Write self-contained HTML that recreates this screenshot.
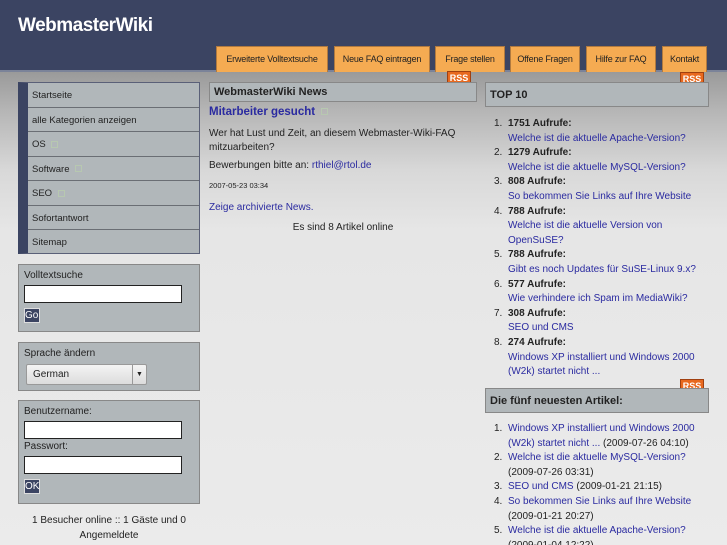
<!DOCTYPE html>
<html><head><meta charset="utf-8"><style>
*{margin:0;padding:0;box-sizing:border-box}
html{width:727px;height:545px;overflow:hidden;background:#ebebeb}
body{width:727px;height:545px;overflow:hidden;font-family:"Liberation Sans",sans-serif;font-size:10px;color:#222;position:relative;
background:linear-gradient(#9a9a9a 72px,#b5b5b5 110px,#d8d8d8 170px,#e6e6e6 230px,#ebebeb 545px)}
.a{position:absolute}
#hd{left:0;top:0;width:727px;height:72px;background:#3b4462;border-bottom:2px solid #7b8399}
#hd h1{position:absolute;left:18px;top:15px;color:#fff;font-size:19px;font-weight:bold;letter-spacing:-0.5px}
.tab{position:absolute;top:46px;height:26px;background:#f5ab52;border:1px solid #b07a40;border-bottom:none;font-size:9px;text-align:center;line-height:24px;color:#222;letter-spacing:-0.2px}
.nav{left:18px;top:82px;width:182px;height:172px;background:#b1b7ba;border:1px solid #5a6078;border-left:10px solid #3b4462}
.nav div{height:24.5px;line-height:25px;padding-left:4px;border-bottom:1px solid #6a6e74;font-size:9.5px}
.nav div:last-child{border:none}
.ic{display:inline-block;width:7px;height:7px;border:1px solid #b7c8b0;margin-left:3px;vertical-align:middle}
.box{left:18px;width:182px;background:#b1b7ba;border:1px solid #888;padding:5px;font-size:10px}
.in{height:18px;width:158px;background:#fff;border:1px solid #222;margin-top:4px}
.btn{display:inline-block;background:#3b4462;color:#fff;font-size:10px;padding:1px 0;width:16px;margin-top:5px;border:1px solid #ddd}
.hb{background:#b1b7ba;border:1px solid #888;font-weight:bold}
.rss{position:absolute;background:#e8691f;color:#fff;font-weight:bold;font-size:9px;width:24px;height:13px;line-height:13px;text-align:center;border:1px solid #a04010}
a,.l{color:#2a2aa0;text-decoration:none}
ol{position:absolute;left:494px;width:210px;list-style:none;font-size:10px;line-height:14.6px}
ol li{padding-left:14px;text-indent:-14px}
ol li span.n{display:inline-block;width:14px;text-indent:0}
</style></head><body>
<div id="hd" class="a"><h1>WebmasterWiki</h1>
<div class="tab" style="left:216px;width:112px">Erweiterte Volltextsuche</div>
<div class="tab" style="left:334px;width:96px">Neue FAQ eintragen</div>
<div class="tab" style="left:435px;width:70px">Frage stellen</div>
<div class="tab" style="left:510px;width:70px">Offene Fragen</div>
<div class="tab" style="left:586px;width:70px">Hilfe zur FAQ</div>
<div class="tab" style="left:662px;width:45px">Kontakt</div>
</div>
<div class="a nav">
<div>Startseite</div><div>alle Kategorien anzeigen</div><div>OS <span class="ic"></span></div><div>Software <span class="ic"></span></div><div>SEO <span class="ic"></span></div><div>Sofortantwort</div><div>Sitemap</div></div>
<div class="a box" style="top:264px;height:68px">Volltextsuche<div class="in"></div><span class="btn">Go</span></div>
<div class="a box" style="top:342px;height:49px">Sprache ändern<div style="margin-top:5px;margin-left:2px;width:121px;height:21px;background:linear-gradient(#f4f4f4,#dcdcdc);border:1px solid #999;border-radius:2px;position:relative;padding-left:6px;line-height:19px">German<span style="position:absolute;right:0;top:0;width:14px;height:19px;border-left:1px solid #999;text-align:center;font-size:7px">▼</span></div></div>
<div class="a box" style="top:400px;height:104px">Benutzername:<div class="in"></div><div style="margin-top:2px">Passwort:</div><div class="in"></div><span class="btn">OK</span></div>
<div class="a" style="left:18px;top:513px;width:182px;text-align:center;line-height:15px">1 Besucher online :: 1 Gäste und 0 Angemeldete</div>

<div class="rss" style="left:447px;top:71px">RSS</div>
<div class="a hb" style="left:209px;top:82px;width:268px;height:20px;padding:3px 4px;font-size:11px">WebmasterWiki News</div>
<div class="a" style="left:209px;top:106px;width:268px;font-size:11.5px;font-weight:bold;color:#2a2aa0;border-bottom:1px solid #bbb;padding-bottom:3px">Mitarbeiter gesucht <span class="ic"></span></div>
<div class="a" style="left:209px;top:127px;width:268px;line-height:14px">Wer hat Lust und Zeit, an diesem Webmaster-Wiki-FAQ mitzuarbeiten?</div>
<div class="a" style="left:209px;top:160px">Bewerbungen bitte an: <span class="l">rthiel@rtol.de</span></div>
<div class="a" style="left:209px;top:181px;font-size:7.5px">2007-05-23 03:34</div>
<div class="a l" style="left:209px;top:202px">Zeige archivierte News.</div>
<div class="a" style="left:209px;top:222px;width:268px;text-align:center">Es sind 8 Artikel online</div>

<div class="rss" style="left:680px;top:72px">RSS</div>
<div class="a hb" style="left:485px;top:82px;width:224px;height:25px;padding:6px 4px;font-size:11px">TOP 10</div>
<ol style="top:117px">
<li><span class="n">1.</span><b>1751 Aufrufe:</b><br><a>Welche ist die aktuelle Apache-Version?</a></li>
<li><span class="n">2.</span><b>1279 Aufrufe:</b><br><a>Welche ist die aktuelle MySQL-Version?</a></li>
<li><span class="n">3.</span><b>808 Aufrufe:</b><br><a>So bekommen Sie Links auf Ihre Website</a></li>
<li><span class="n">4.</span><b>788 Aufrufe:</b><br><a>Welche ist die aktuelle Version von OpenSuSE?</a></li>
<li><span class="n">5.</span><b>788 Aufrufe:</b><br><a>Gibt es noch Updates für SuSE-Linux 9.x?</a></li>
<li><span class="n">6.</span><b>577 Aufrufe:</b><br><a>Wie verhindere ich Spam im MediaWiki?</a></li>
<li><span class="n">7.</span><b>308 Aufrufe:</b><br><a>SEO und CMS</a></li>
<li><span class="n">8.</span><b>274 Aufrufe:</b><br><a>Windows XP installiert und Windows 2000 (W2k) startet nicht ...</a></li>
</ol>
<div class="rss" style="left:680px;top:379px">RSS</div>
<div class="a hb" style="left:485px;top:388px;width:224px;height:25px;padding:6px 4px;font-size:11px">Die fünf neuesten Artikel:</div>
<ol style="top:422px">
<li><span class="n">1.</span><a>Windows XP installiert und Windows 2000 (W2k) startet nicht ...</a> (2009-07-26 04:10)</li>
<li><span class="n">2.</span><a>Welche ist die aktuelle MySQL-Version?</a><br>(2009-07-26 03:31)</li>
<li><span class="n">3.</span><a>SEO und CMS</a> (2009-01-21 21:15)</li>
<li><span class="n">4.</span><a>So bekommen Sie Links auf Ihre Website</a><br>(2009-01-21 20:27)</li>
<li><span class="n">5.</span><a>Welche ist die aktuelle Apache-Version?</a><br>(2009-01-04 12:22)</li>
</ol>
</body></html>
